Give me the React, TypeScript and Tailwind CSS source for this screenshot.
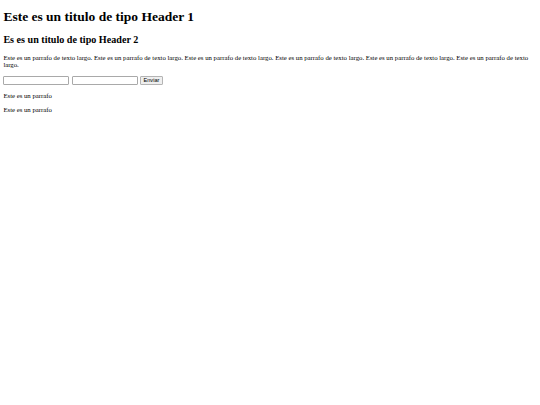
export default function App() {
  const parrafo = Array(6).fill("Este es un parrafo de texto largo.").join(" ");
  return (
    <div
      className="flow-root min-h-[405px] bg-white px-[3.375px] text-black"
      style={{ fontFamily: '"Liberation Serif", "Times New Roman", serif' }}
    >
      <h1 className="my-[9.05px] text-[13.5px] font-bold leading-[1.15]">
        Este es un titulo de tipo Header 1
      </h1>
      <h2 className="my-[8.4px] text-[10.125px] font-bold leading-[1.15]">
        Es es un titulo de tipo Header 2
      </h2>
      <p className="my-[6.75px] text-[6.75px] leading-[1.15]">{parrafo}</p>
      <form
        className="flex items-center gap-[2.3px]"
        onSubmit={(e) => e.preventDefault()}
      >
        <input
          type="text"
          className="box-border h-[9px] w-[66px] rounded-[1px] border border-[#a9a9a9] bg-white px-[1px] text-[5.6px]"
        />
        <input
          type="text"
          className="box-border h-[9px] w-[66px] rounded-[1px] border border-[#a9a9a9] bg-white px-[1px] text-[5.6px]"
        />
        <button
          type="submit"
          className="box-border h-[9px] w-[23px] rounded-[1px] border border-[#b4b4b4] bg-[#efefef] text-[5.6px] leading-none text-black"
          style={{ fontFamily: '"Liberation Sans", Arial, sans-serif' }}
        >
          Enviar
        </button>
      </form>
      <p className="my-[6.75px] text-[6.75px] leading-[1.15]">Este es un parrafo</p>
      <p className="my-[6.75px] text-[6.75px] leading-[1.15]">Este es un parrafo</p>
    </div>
  );
}
